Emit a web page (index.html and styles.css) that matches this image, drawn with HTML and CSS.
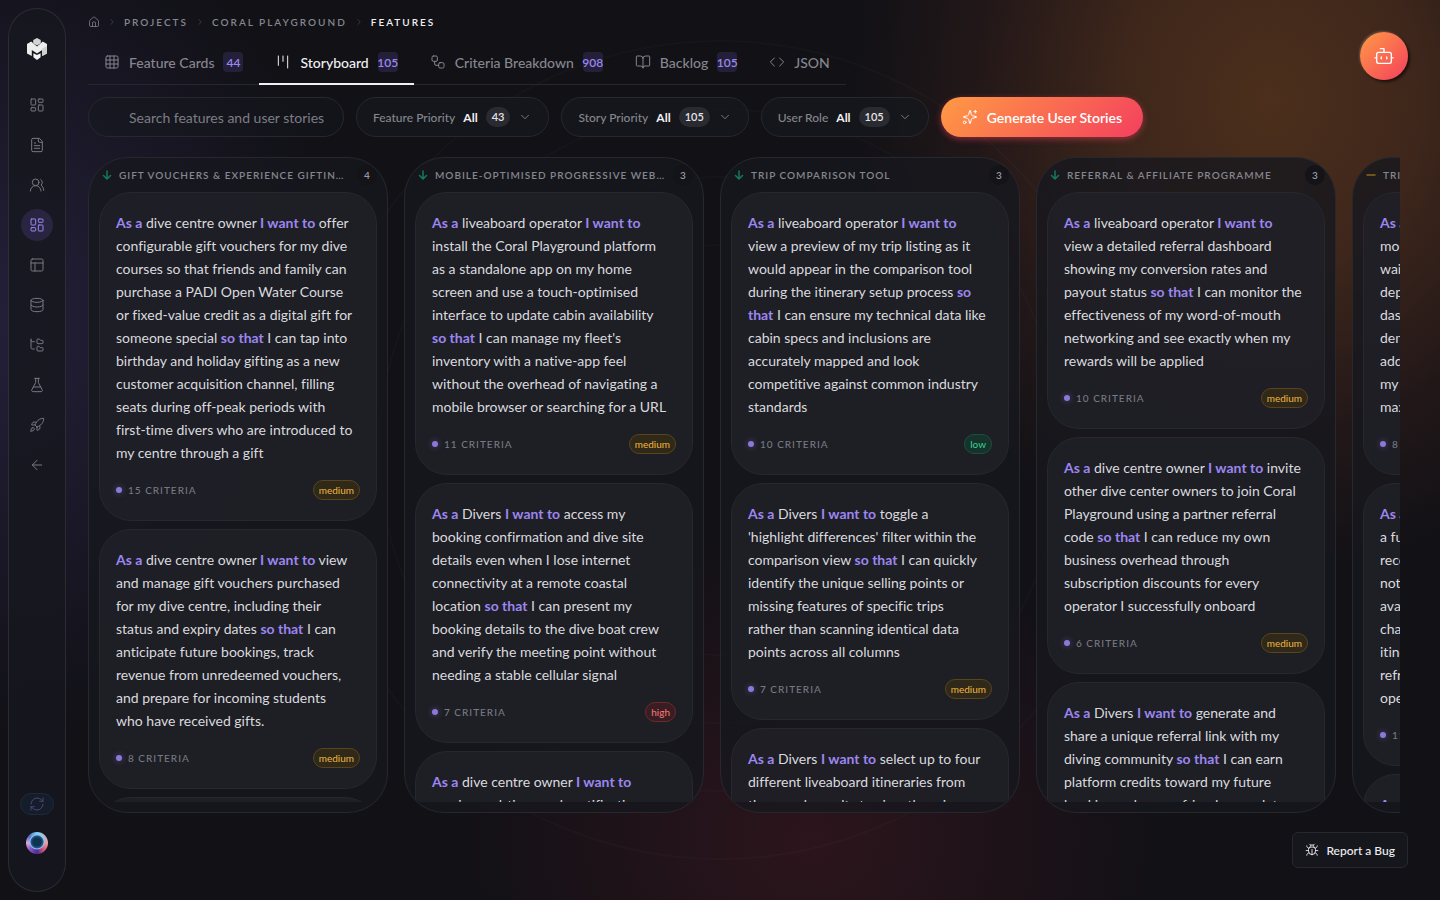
FILE: index.html
```html
<!DOCTYPE html>
<html lang="en">
<head>
  <meta charset="UTF-8">
  <meta name="viewport" content="width=device-width, initial-scale=1.0">
  <title>Features - Coral Playground</title>
  <link rel="stylesheet" href="styles.css">
</head>
<body>
  <!-- Icon sprite -->
  <svg class="sprite" aria-hidden="true">
    <symbol id="i-dashboard" viewBox="0 0 24 24"><rect x="3" y="3" width="7" height="9" rx="1"/><rect x="14" y="3" width="7" height="5" rx="1"/><rect x="14" y="12" width="7" height="9" rx="1"/><rect x="3" y="16" width="7" height="5" rx="1"/></symbol>
    <symbol id="i-file" viewBox="0 0 24 24"><path d="M15 2H6a2 2 0 0 0-2 2v16a2 2 0 0 0 2 2h12a2 2 0 0 0 2-2V7Z"/><path d="M14 2v4a2 2 0 0 0 2 2h4M10 9H8M16 13H8M16 17H8"/></symbol>
    <symbol id="i-users" viewBox="0 0 24 24"><path d="M18 21a8 8 0 0 0-16 0"/><circle cx="10" cy="8" r="5"/><path d="M22 20c0-3.370-2-6.500-4-8a5 5 0 0 0-.450-8.300"/></symbol>
    <symbol id="i-panels" viewBox="0 0 24 24"><rect x="3" y="3" width="18" height="18" rx="2"/><path d="M3 9h18M9 21V9"/></symbol>
    <symbol id="i-database" viewBox="0 0 24 24"><ellipse cx="12" cy="5" rx="9" ry="3"/><path d="M3 5v14a9 3 0 0 0 18 0V5"/><path d="M3 12a9 3 0 0 0 18 0"/></symbol>
    <symbol id="i-tree" viewBox="0 0 24 24"><path d="M20 10a1 1 0 0 0 1-1V6a1 1 0 0 0-1-1h-2.500a1 1 0 0 1-.800-.400l-.900-1.200A1 1 0 0 0 15 3h-2a1 1 0 0 0-1 1v5a1 1 0 0 0 1 1Z"/><path d="M20 21a1 1 0 0 0 1-1v-3a1 1 0 0 0-1-1h-2.900a1 1 0 0 1-.880-.550l-.420-.850a1 1 0 0 0-.920-.600H13a1 1 0 0 0-1 1v5a1 1 0 0 0 1 1Z"/><path d="M3 5a2 2 0 0 0 2 2h3M3 3v13a2 2 0 0 0 2 2h3"/></symbol>
    <symbol id="i-flask" viewBox="0 0 24 24"><path d="M14 2v6a2 2 0 0 0 .245.960l5.510 10.080A2 2 0 0 1 18 22H6a2 2 0 0 1-1.755-2.960l5.510-10.080A2 2 0 0 0 10 8V2M6.450 15h11.100M8.500 2h7"/></symbol>
    <symbol id="i-rocket" viewBox="0 0 24 24"><path d="M4.500 16.500c-1.500 1.260-2 5-2 5s3.740-.500 5-2c.710-.840.700-2.130-.090-2.910a2.180 2.180 0 0 0-2.910-.090z"/><path d="m12 15-3-3a22 22 0 0 1 2-3.950A12.880 12.880 0 0 1 22 2c0 2.720-.780 7.500-6 11a22.350 22.350 0 0 1-4 2z"/><path d="M9 12H4s.550-3.030 2-4c1.620-1.080 5 0 5 0M12 15v5s3.030-.550 4-2c1.080-1.620 0-5 0-5"/></symbol>
    <symbol id="i-back" viewBox="0 0 24 24"><path d="m12 19-7-7 7-7M19 12H5"/></symbol>
    <symbol id="i-sync" viewBox="0 0 24 24"><path d="M3 12a9 9 0 0 1 9-9 9.750 9.750 0 0 1 6.740 2.740L21 8"/><path d="M21 3v5h-5M21 12a9 9 0 0 1-9 9 9.750 9.750 0 0 1-6.740-2.740L3 16"/><path d="M8 16H3v5"/></symbol>
    <symbol id="i-home" viewBox="0 0 24 24"><path d="M15 21v-8a1 1 0 0 0-1-1h-4a1 1 0 0 0-1 1v8"/><path d="M3 10a2 2 0 0 1 .709-1.528l7-6a2 2 0 0 1 2.582 0l7 6A2 2 0 0 1 21 10v9a2 2 0 0 1-2 2H5a2 2 0 0 1-2-2z"/></symbol>
    <symbol id="i-right" viewBox="0 0 24 24"><path d="m9 18 6-6-6-6"/></symbol>
    <symbol id="i-chevron" viewBox="0 0 24 24"><path d="m6 9 6 6 6-6"/></symbol>
    <symbol id="i-grid" viewBox="0 0 24 24"><rect x="3" y="3" width="18" height="18" rx="2"/><path d="M3 9h18M3 15h18M9 3v18M15 3v18"/></symbol>
    <symbol id="i-kanban" viewBox="0 0 24 24"><path d="M5 3v14M12 3v8M19 3v18"/></symbol>
    <symbol id="i-workflow" viewBox="0 0 24 24"><rect x="3" y="3" width="8" height="8" rx="2"/><path d="M7 11v4a2 2 0 0 0 2 2h4"/><rect x="13" y="13" width="8" height="8" rx="2"/></symbol>
    <symbol id="i-book" viewBox="0 0 24 24"><path d="M12 7v14"/><path d="M3 18a1 1 0 0 1-1-1V4a1 1 0 0 1 1-1h5a4 4 0 0 1 4 4 4 4 0 0 1 4-4h5a1 1 0 0 1 1 1v13a1 1 0 0 1-1 1h-6a3 3 0 0 0-3 3 3 3 0 0 0-3-3z"/></symbol>
    <symbol id="i-code" viewBox="0 0 24 24"><path d="m16 18 6-6-6-6M8 6l-6 6 6 6"/></symbol>
    <symbol id="i-sparkles" viewBox="0 0 24 24"><path d="M9.940 15.500A2 2 0 0 0 8.500 14.060l-6.140-1.580a.500.500 0 0 1 0-.960L8.500 9.940A2 2 0 0 0 9.940 8.500l1.580-6.140a.500.500 0 0 1 .960 0L14.060 8.500A2 2 0 0 0 15.500 9.940l6.140 1.580a.500.500 0 0 1 0 .960L15.500 14.060a2 2 0 0 0-1.440 1.440l-1.580 6.140a.500.500 0 0 1-.960 0z"/><path d="M20 2v4M22 4h-4"/><circle cx="4" cy="20" r="2"/></symbol>
    <symbol id="i-bot" viewBox="0 0 24 24"><path d="M12 8V4H8"/><rect x="4" y="8" width="16" height="12" rx="2"/><path d="M2 14h2M20 14h2M15 13v2M9 13v2"/></symbol>
    <symbol id="i-bug" viewBox="0 0 24 24"><path d="m8 2 1.880 1.880M14.120 3.880 16 2M9 7.130v-1a3 3 0 1 1 6 0v1"/><path d="M12 20a6 6 0 0 1-6-6v-3a4 4 0 0 1 4-4h4a4 4 0 0 1 4 4v3a6 6 0 0 1-6 6M12 20v-9M6.530 9C4.600 8.800 3 7.100 3 5M6 13H2M3 21c0-2.100 1.700-3.900 3.800-4M20.970 5c0 2.100-1.600 3.800-3.500 4M22 13h-4M17.200 17c2.100.100 3.800 1.900 3.800 4"/></symbol>
    <symbol id="i-down" viewBox="0 0 24 24"><path d="M12 4v16M19 13l-7 7-7-7"/></symbol>
    <symbol id="i-minus" viewBox="0 0 24 24"><path d="M4 12h16"/></symbol>
  </svg>

  <!-- Background rings -->
  <svg class="rings" width="820" height="820" viewBox="0 0 820 820" aria-hidden="true">
    <circle cx="410" cy="410" r="205"/><circle cx="410" cy="410" r="273"/><circle cx="410" cy="410" r="341"/><circle cx="410" cy="410" r="409"/>
  </svg>

  <aside class="sidebar">
    <a href="#" class="logo" aria-label="Home">
      <svg width="20" height="22" viewBox="0 0 20 22">
        <path fill="#d4d4d4" d="M10 0l3.800 2v3.200L10 7.400 6.200 5.200V2z"/>
        <path fill="#ededed" d="M0 6l4.200-2.600L10 8.600l5.800-5.200L20 6v9.500L15.200 18v-6L10 15.600 4.800 12v6L0 15.500z"/>
        <path fill="#d0d0d0" d="M15.200 10.500 20 8v7.500L15.200 18z"/>
        <path fill="#f4f4f4" d="M6.400 15.200 10 17l3.600-1.800v4L10 22l-3.600-2.800z"/>
      </svg>
    </a>
    <nav class="side-nav">
      <a href="#" aria-label="Dashboard"><svg class="icon"><use href="#i-dashboard"/></svg></a>
      <a href="#" aria-label="Documents"><svg class="icon"><use href="#i-file"/></svg></a>
      <a href="#" aria-label="Users"><svg class="icon"><use href="#i-users"/></svg></a>
      <a href="#" class="active" aria-label="Features"><svg class="icon"><use href="#i-dashboard"/></svg></a>
      <a href="#" aria-label="Layouts"><svg class="icon"><use href="#i-panels"/></svg></a>
      <a href="#" aria-label="Data"><svg class="icon"><use href="#i-database"/></svg></a>
      <a href="#" aria-label="Structure"><svg class="icon"><use href="#i-tree"/></svg></a>
      <a href="#" aria-label="Tests"><svg class="icon"><use href="#i-flask"/></svg></a>
      <a href="#" aria-label="Deploy"><svg class="icon"><use href="#i-rocket"/></svg></a>
      <a href="#" aria-label="Back"><svg class="icon"><use href="#i-back"/></svg></a>
    </nav>
    <div class="side-bottom">
      <button class="sync" aria-label="Sync"><svg class="icon"><use href="#i-sync"/></svg></button>
      <button class="avatar" aria-label="Account"></button>
    </div>
  </aside>

  <main class="main">
    <nav class="breadcrumb">
      <a href="#" aria-label="Home"><svg class="icon home"><use href="#i-home"/></svg></a>
      <svg class="icon sep"><use href="#i-right"/></svg>
      <a href="#">Projects</a>
      <svg class="icon sep"><use href="#i-right"/></svg>
      <a href="#">Coral Playground</a>
      <svg class="icon sep"><use href="#i-right"/></svg>
      <span class="current">Features</span>
    </nav>

    <div class="tabs" role="tablist">
      <button class="tab" role="tab"><svg class="icon"><use href="#i-grid"/></svg>Feature Cards<span class="tab-count">44</span></button>
      <button class="tab active" role="tab" aria-selected="true"><svg class="icon"><use href="#i-kanban"/></svg>Storyboard<span class="tab-count">105</span></button>
      <button class="tab" role="tab"><svg class="icon"><use href="#i-workflow"/></svg>Criteria Breakdown<span class="tab-count">908</span></button>
      <button class="tab" role="tab"><svg class="icon"><use href="#i-book"/></svg>Backlog<span class="tab-count">105</span></button>
      <button class="tab" role="tab"><svg class="icon"><use href="#i-code"/></svg>JSON</button>
    </div>

    <div class="filters">
      <input type="text" class="search" placeholder="Search features and user stories" aria-label="Search features and user stories">
      <button class="filter">Feature Priority <b>All</b><span class="filter-count">43</span><svg class="icon"><use href="#i-chevron"/></svg></button>
      <button class="filter">Story Priority <b>All</b><span class="filter-count">105</span><svg class="icon"><use href="#i-chevron"/></svg></button>
      <button class="filter">User Role <b>All</b><span class="filter-count">105</span><svg class="icon"><use href="#i-chevron"/></svg></button>
      <button class="generate"><svg class="icon"><use href="#i-sparkles"/></svg>Generate User Stories</button>
    </div>

    <div class="board">
      <section class="column">
        <header class="column-head"><svg class="icon low"><use href="#i-down"/></svg><h2>Gift Vouchers &amp; Experience Gifting Programme</h2><span class="column-count">4</span></header>
        <div class="cards">
          <article class="card">
            <p><b>As a</b> dive centre owner <b>I want to</b> offer<br>configurable gift vouchers for my dive<br>courses so that friends and family can<br>purchase a PADI Open Water Course<br>or fixed-value credit as a digital gift for<br>someone special <b>so that</b> I can tap into<br>birthday and holiday gifting as a new<br>customer acquisition channel, filling<br>seats during off-peak periods with<br>first-time divers who are introduced to<br>my centre through a gift</p>
            <footer><span class="criteria">15 Criteria</span><span class="pill medium">medium</span></footer>
          </article>
          <article class="card">
            <p><b>As a</b> dive centre owner <b>I want to</b> view<br>and manage gift vouchers purchased<br>for my dive centre, including their<br>status and expiry dates <b>so that</b> I can<br>anticipate future bookings, track<br>revenue from unredeemed vouchers,<br>and prepare for incoming students<br>who have received gifts.</p>
            <footer><span class="criteria">8 Criteria</span><span class="pill medium">medium</span></footer>
          </article>
          <article class="card">
            <p><b>As a</b> Divers <b>I want to</b> redeem a gift voucher</p>
            <footer><span class="criteria">9 Criteria</span><span class="pill medium">medium</span></footer>
          </article>
        </div>
      </section>

      <section class="column">
        <header class="column-head"><svg class="icon low"><use href="#i-down"/></svg><h2>Mobile-Optimised Progressive Web App</h2><span class="column-count">3</span></header>
        <div class="cards">
          <article class="card">
            <p><b>As a</b> liveaboard operator <b>I want to</b><br>install the Coral Playground platform<br>as a standalone app on my home<br>screen and use a touch-optimised<br>interface to update cabin availability<br><b>so that</b> I can manage my fleet's<br>inventory with a native-app feel<br>without the overhead of navigating a<br>mobile browser or searching for a URL</p>
            <footer><span class="criteria">11 Criteria</span><span class="pill medium">medium</span></footer>
          </article>
          <article class="card">
            <p><b>As a</b> Divers <b>I want to</b> access my<br>booking confirmation and dive site<br>details even when I lose internet<br>connectivity at a remote coastal<br>location <b>so that</b> I can present my<br>booking details to the dive boat crew<br>and verify the meeting point without<br>needing a stable cellular signal</p>
            <footer><span class="criteria">7 Criteria</span><span class="pill high">high</span></footer>
          </article>
          <article class="card">
            <p><b>As a</b> dive centre owner <b>I want to</b><br>receive real-time push notifications<br>when a diver makes a booking</p>
            <footer><span class="criteria">9 Criteria</span><span class="pill medium">medium</span></footer>
          </article>
        </div>
      </section>

      <section class="column">
        <header class="column-head"><svg class="icon low"><use href="#i-down"/></svg><h2>Trip Comparison Tool</h2><span class="column-count">3</span></header>
        <div class="cards">
          <article class="card">
            <p><b>As a</b> liveaboard operator <b>I want to</b><br>view a preview of my trip listing as it<br>would appear in the comparison tool<br>during the itinerary setup process <b>so<br>that</b> I can ensure my technical data like<br>cabin specs and inclusions are<br>accurately mapped and look<br>competitive against common industry<br>standards</p>
            <footer><span class="criteria">10 Criteria</span><span class="pill low">low</span></footer>
          </article>
          <article class="card">
            <p><b>As a</b> Divers <b>I want to</b> toggle a<br>'highlight differences' filter within the<br>comparison view <b>so that</b> I can quickly<br>identify the unique selling points or<br>missing features of specific trips<br>rather than scanning identical data<br>points across all columns</p>
            <footer><span class="criteria">7 Criteria</span><span class="pill medium">medium</span></footer>
          </article>
          <article class="card">
            <p><b>As a</b> Divers <b>I want to</b> select up to four<br>different liveaboard itineraries from<br>the search results to view them in a<br>side-by-side table</p>
            <footer><span class="criteria">9 Criteria</span><span class="pill medium">medium</span></footer>
          </article>
        </div>
      </section>

      <section class="column">
        <header class="column-head"><svg class="icon low"><use href="#i-down"/></svg><h2>Referral &amp; Affiliate Programme</h2><span class="column-count">3</span></header>
        <div class="cards">
          <article class="card">
            <p><b>As a</b> liveaboard operator <b>I want to</b><br>view a detailed referral dashboard<br>showing my conversion rates and<br>payout status <b>so that</b> I can monitor the<br>effectiveness of my word-of-mouth<br>networking and see exactly when my<br>rewards will be applied</p>
            <footer><span class="criteria">10 Criteria</span><span class="pill medium">medium</span></footer>
          </article>
          <article class="card">
            <p><b>As a</b> dive centre owner <b>I want to</b> invite<br>other dive center owners to join Coral<br>Playground using a partner referral<br>code <b>so that</b> I can reduce my own<br>business overhead through<br>subscription discounts for every<br>operator I successfully onboard</p>
            <footer><span class="criteria">6 Criteria</span><span class="pill medium">medium</span></footer>
          </article>
          <article class="card">
            <p><b>As a</b> Divers <b>I want to</b> generate and<br>share a unique referral link with my<br>diving community <b>so that</b> I can earn<br>platform credits toward my future<br>bookings when my friends complete<br>their first trip</p>
            <footer><span class="criteria">9 Criteria</span><span class="pill medium">medium</span></footer>
          </article>
        </div>
      </section>

      <section class="column">
        <header class="column-head"><svg class="icon mid"><use href="#i-minus"/></svg><h2>Trip Waitlist &amp; Changes</h2><span class="column-count">3</span></header>
        <div class="cards">
          <article class="card">
            <p><b>As a</b> liveaboard operator <b>I want to</b><br>monitor the length of every trip<br>waitlist for each of my upcoming<br>departures from one operator<br>dashboard <b>so that</b> I can see the<br>demand for popular routes and<br>add extra cabins or new dates to<br>my schedule when it helps to<br>maximise the revenue per trip</p>
            <footer><span class="criteria">8 Criteria</span><span class="pill medium">medium</span></footer>
          </article>
          <article class="card">
            <p><b>As a</b> Divers <b>I want to</b> join a list for<br>a fully booked departure and<br>receive an automatic alert or a<br>notification when a cabin is<br>available <b>so that</b> I have a better<br>chance of joining the preferred<br>itinerary without the need to<br>refresh the page or contact the<br>operator by email</p>
            <footer><span class="criteria">11 Criteria</span><span class="pill medium">medium</span></footer>
          </article>
          <article class="card">
            <p><b>As a</b> dive centre owner <b>I want to</b><br>offer places to waitlisted divers</p>
            <footer><span class="criteria">9 Criteria</span><span class="pill medium">medium</span></footer>
          </article>
        </div>
      </section>
    </div>
  </main>

  <button class="assistant" aria-label="Open assistant"><svg class="icon"><use href="#i-bot"/></svg></button>
  <button class="report"><svg class="icon"><use href="#i-bug"/></svg>Report a Bug</button>
</body>
</html>
```
FILE: styles.css
```css
/* General */
* {
  box-sizing: border-box;
}

body {
  margin: 0;
  height: 100vh;
  display: flex;
  overflow: hidden;
  font-family: Lato, "Open Sans", sans-serif;
  font-size: 14px;
  font-variant-ligatures: none;
  color: #d9dade;
  background:
    radial-gradient(ellipse 340px 420px at 0 320px, rgba(96, 76, 170, 0.24), rgba(96, 76, 170, 0.12) 50%, transparent),
    radial-gradient(ellipse 420px 480px at 1270px 100px, rgba(190, 106, 40, 0.34), rgba(180, 94, 40, 0.28) 35%, rgba(160, 70, 40, 0.12) 70%, transparent),
    radial-gradient(ellipse 360px 320px at 810px 840px, rgba(170, 36, 56, 0.18), transparent),
    #111116;
}

button, input {
  font-family: inherit;
  font-size: inherit;
  border: none;
  background: none;
  padding: 0;
  cursor: pointer;
}

a {
  color: inherit;
  text-decoration: none;
}

.sprite {
  display: none;
}

.icon {
  width: 16px;
  height: 16px;
  flex: none;
  fill: none;
  stroke: currentColor;
  stroke-width: 1.5;
  stroke-linecap: round;
  stroke-linejoin: round;
}

.rings {
  position: absolute;
  left: 50%;
  top: 50%;
  transform: translate(-50%, -50%);
  fill: none;
  stroke: rgba(255, 255, 255, 0.02);
  stroke-width: 2;
}

/* Sidebar */
.sidebar {
  position: relative;
  display: flex;
  flex-direction: column;
  align-items: center;
  flex: none;
  width: 58px;
  margin: 8px 0 8px 8px;
  padding: 29px 0 37px;
  border: 1px solid rgba(255, 255, 255, 0.09);
  border-radius: 29px;
  background: rgba(22, 24, 30, 0.85);
}

.logo {
  display: flex;
  margin-bottom: 29px;
}

.side-nav {
  display: flex;
  flex-direction: column;
  gap: 8px;
}

.side-nav a {
  display: flex;
  align-items: center;
  justify-content: center;
  width: 32px;
  height: 32px;
  border-radius: 50%;
  color: #777982;
}

.side-nav a.active {
  color: #9c86f0;
  background: #292540;
}

.side-bottom {
  display: flex;
  flex-direction: column;
  align-items: center;
  gap: 17px;
  margin-top: auto;
}

.sync {
  display: flex;
  align-items: center;
  justify-content: center;
  width: 34px;
  height: 22px;
  border: 1px solid #1c2a3c;
  border-radius: 11px;
  background: #161d2a;
  color: #4b4774;
}

.avatar {
  width: 22px;
  height: 22px;
  border-radius: 50%;
  background:
    radial-gradient(circle at 50% 45%, #0d3550 0 4px, #28598c 6px, #8cc8f0 7px, transparent 8px),
    conic-gradient(#7fd4f5, #e9a0a8 90deg, #e05a78 130deg, #4c2b98 180deg, #8a5ac8 230deg, #d9a8e0 270deg, #5a6fd0 310deg, #7fd4f5);
}

/* Main area */
.main {
  position: relative;
  display: flex;
  flex-direction: column;
  flex: 1;
  min-width: 0;
  padding: 12px 40px 87px 22px;
}

.breadcrumb {
  display: flex;
  align-items: center;
  gap: 7px;
  height: 20px;
  font-size: 10px;
  font-weight: 600;
  letter-spacing: 2px;
  text-transform: uppercase;
  color: #85868e;
}

.breadcrumb a {
  display: flex;
}

.breadcrumb .home {
  width: 12px;
  height: 12px;
}

.breadcrumb .sep {
  width: 10px;
  height: 10px;
  color: #4c4d55;
}

.breadcrumb .current {
  color: #f0f0f3;
}

.tabs {
  display: flex;
  align-self: flex-start;
  margin-top: 9px;
  border-bottom: 1px solid #27282e;
}

.tab {
  display: flex;
  align-items: center;
  gap: 9px;
  height: 44px;
  margin-bottom: -1px;
  padding: 0 16px;
  border-bottom: 2px solid transparent;
  font-weight: 500;
  color: #85868e;
}

.tab.active {
  color: #f0f0f3;
  border-bottom-color: #f0f0f3;
}

.tab-count {
  width: 20px;
  height: 20px;
  display: flex;
  align-items: center;
  justify-content: center;
  border-radius: 4px;
  background: #242039;
  color: #9c86f0;
  font-size: 12px;
  font-weight: 600;
}

.filters {
  display: flex;
  gap: 12px;
  margin-top: 12px;
}

.search {
  width: 256px;
  height: 40px;
  padding: 0 16px 0 40px;
  border: 1px solid #27282e;
  border-radius: 20px;
  background: rgba(22, 24, 30, 0.5);
  color: #d9dade;
  outline: none;
}

.search::placeholder {
  color: #7c7d85;
}

.filter {
  display: flex;
  align-items: center;
  gap: 8px;
  height: 40px;
  padding: 0 16px;
  border: 1px solid #27282e;
  border-radius: 20px;
  background: rgba(22, 24, 30, 0.7);
  color: #85868e;
  font-size: 12px;
  font-weight: 500;
}

.filter b {
  color: #f0f0f3;
}

.filter-count {
  padding: 0 6px;
  line-height: 20px;
  border-radius: 10px;
  background: #2a2b31;
  color: #e4e4e8;
  font-size: 11px;
  font-weight: 600;
}

.filter .icon {
  width: 14px;
  height: 14px;
}

.generate {
  display: flex;
  align-items: center;
  gap: 9px;
  height: 40px;
  padding: 0 21px;
  border-radius: 20px;
  background: linear-gradient(135deg, #ff9a44, #f43f5e);
  box-shadow: 0 2px 6px rgba(244, 63, 94, 0.5);
  color: #fff;
  font-weight: 600;
}

/* Board */
.board {
  display: flex;
  flex: 1;
  gap: 16px;
  min-height: 0;
  margin-top: 20px;
  overflow: hidden;
}

.column {
  display: flex;
  flex-direction: column;
  flex: none;
  width: 300px;
  padding: 0 10px 10px;
  border: 1px solid #27282e;
  border-radius: 40px;
  background: rgba(22, 24, 30, 0.8);
  overflow: hidden;
}

.column-head {
  display: flex;
  align-items: center;
  gap: 6px;
  flex: none;
  height: 34px;
  padding: 0 0 0 2px;
}

.column-head .icon {
  width: 12px;
  height: 12px;
  stroke-width: 3;
}

.column-head .low {
  color: #14795a;
}

.column-head .mid {
  color: #8a6a16;
}

.column-head h2 {
  flex: 1;
  margin: 0;
  overflow: hidden;
  white-space: nowrap;
  text-overflow: ellipsis;
  font-size: 10px;
  font-weight: 600;
  letter-spacing: 1px;
  text-transform: uppercase;
  color: #85868e;
}

.column-count {
  width: 20px;
  line-height: 20px;
  border-radius: 50%;
  background: #131318;
  text-align: center;
  font-size: 10px;
  font-weight: 600;
  color: #9a9ba2;
}

.cards {
  display: flex;
  flex-direction: column;
  gap: 8px;
  min-height: 0;
  overflow: hidden;
}

.card {
  flex: none;
  padding: 18px 16px 20px;
  border: 1px solid #27282f;
  border-radius: 32px;
  background: rgba(32, 33, 40, 0.8);
}

.card p {
  margin: 0 0 16px;
  line-height: 23px;
  white-space: nowrap;
}

.card p b {
  color: #9c86f0;
}

.card footer {
  display: flex;
  align-items: center;
  justify-content: space-between;
}

.criteria {
  display: flex;
  align-items: center;
  gap: 6px;
  font-size: 10px;
  font-weight: 500;
  letter-spacing: 1px;
  text-transform: uppercase;
  color: #777982;
}

.criteria::before {
  content: "";
  width: 6px;
  height: 6px;
  border-radius: 50%;
  background: #8b78d8;
  box-shadow: 0 0 6px rgba(139, 120, 216, 0.5);
}

.pill {
  padding: 0 5px;
  line-height: 18px;
  border: 1px solid;
  border-radius: 10px;
  font-size: 10px;
}

.pill.medium {
  color: #f0b83c;
  background: #302818;
  border-color: #59451c;
}

.pill.high {
  color: #f47c7c;
  background: #3a1d22;
  border-color: #6a2a2f;
}

.pill.low {
  color: #3cd095;
  background: #15322b;
  border-color: #1b5040;
}

/* Floating buttons */
.assistant {
  position: fixed;
  top: 32px;
  right: 32px;
  display: flex;
  align-items: center;
  justify-content: center;
  width: 48px;
  height: 48px;
  border-radius: 50%;
  background: linear-gradient(135deg, #ff9a44, #f43f5e);
  box-shadow: 2px 2px 3px rgba(0, 0, 0, 0.6), -1px -1px 2px rgba(255, 255, 255, 0.2);
  color: #fff;
}

.assistant .icon {
  width: 22px;
  height: 22px;
}

.report {
  position: fixed;
  right: 32px;
  bottom: 32px;
  display: flex;
  align-items: center;
  gap: 7px;
  height: 36px;
  padding: 0 12px;
  border: 1px solid #27282e;
  border-radius: 6px;
  background: #16171d;
  color: #f0f0f3;
  font-size: 12px;
  font-weight: 500;
}

.report .icon {
  width: 14px;
  height: 14px;
}
```
